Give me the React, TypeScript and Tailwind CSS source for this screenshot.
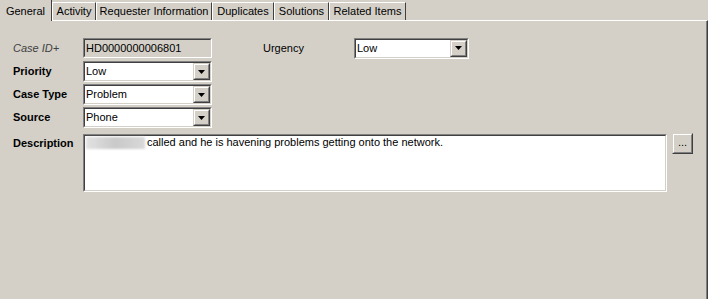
import React from "react";

const font = { fontFamily: '"Liberation Sans", Arial, sans-serif' };

function Sunken({ className = "", innerClass = "", children }: { className?: string; innerClass?: string; children?: React.ReactNode }) {
  return (
    <div className={`border border-t-[#808080] border-l-[#808080] border-b-white border-r-white ${className}`}>
      <div className={`h-full w-full border border-t-[#404040] border-l-[#404040] border-b-[#d4d0c8] border-r-[#d4d0c8] ${innerClass}`}>
        {children}
      </div>
    </div>
  );
}

function Raised({ className = "", children }: { className?: string; children?: React.ReactNode }) {
  return (
    <div className={`border border-t-[#d4d0c8] border-l-[#d4d0c8] border-b-[#404040] border-r-[#404040] ${className}`}>
      <div className="h-full w-full border border-t-white border-l-white border-b-[#808080] border-r-[#808080] bg-[#d4d0c8] flex items-center justify-center">
        {children}
      </div>
    </div>
  );
}

function Select({ value, w }: { value: string; w: string }) {
  return (
    <Sunken className={`${w} h-[21px]`} innerClass="bg-white flex items-stretch">
      <div className="flex-1 pl-[1px] text-[11px] leading-[13px] text-black flex items-center">{value}</div>
      <Raised className="w-[17px]">
        <svg width="7" height="4" viewBox="0 0 7 4">
          <polygon points="0,0 7,0 3.5,4" fill="#000" />
        </svg>
      </Raised>
    </Sunken>
  );
}

const tabs = [
  { name: "General", w: "w-[52px]" },
  { name: "Activity", w: "w-[44px]" },
  { name: "Requester Information", w: "w-[116px]" },
  { name: "Duplicates", w: "w-[62px]" },
  { name: "Solutions", w: "w-[55px]" },
  { name: "Related Items", w: "w-[77px]" },
];

export default function App() {
  return (
    <div className="w-[708px] h-[299px] bg-[#d4d0c8] flex flex-col overflow-hidden text-black" style={font}>
      <div className="h-[20px] flex items-end shrink-0">
        {tabs.map((t, i) =>
          i === 0 ? (
            <div
              key={t.name}
              className={`${t.w} self-start h-[21px] relative z-10 bg-[#d4d0c8] border-r border-r-[#404040] flex items-center justify-center text-[11px] leading-[13px] pt-[2px]`}
            >
              {t.name}
            </div>
          ) : (
            <div
              key={t.name}
              className={`${t.w} h-[18px] border-t border-l border-t-white border-l-white border-r border-r-[#404040] flex items-center justify-center text-[11px] leading-[13px]`}
            >
              <span className="whitespace-nowrap">{t.name}</span>
            </div>
          )
        )}
      </div>
      <div className="flex-1 border-t border-t-white border-r border-r-[#404040]">
        <div className="h-full border-r border-r-[#808080] pl-[13px] pt-[17px] text-[11px] leading-[13px]">
          <div className="flex items-center h-[20px]">
            <div className="w-[70px] italic text-[#404040]">Case ID+</div>
            <Sunken className="w-[129px] h-[20px]" innerClass="bg-[#d4d0c8] flex items-center pl-[1px]">
              HD0000000006801
            </Sunken>
            <div className="ml-[51px] w-[91px]">Urgency</div>
            <Select value="Low" w="w-[115px]" />
          </div>
          <div className="flex flex-col gap-[2px] mt-[3px]">
            {[
              ["Priority", "Low"],
              ["Case Type", "Problem"],
              ["Source", "Phone"],
            ].map(([l, v]) => (
              <div key={l} className="flex items-center h-[21px]">
                <div className="w-[70px] font-bold">{l}</div>
                <Select value={v} w="w-[129px]" />
              </div>
            ))}
          </div>
          <div className="flex items-start mt-[6px]">
            <div className="w-[70px] font-bold mt-[3px]">Description</div>
            <Sunken className="w-[584px] h-[58px]" innerClass="bg-white">
              <div className="flex items-center pl-[1px] h-[13px]">
                <div className="w-[59px] h-[12px] mr-[2px] bg-gradient-to-r from-[#e2e2e2] via-[#c9c9c9] to-[#d9d9d9] blur-[1px]" />
                <span className="whitespace-nowrap">called and he is havening problems getting onto the network.</span>
              </div>
            </Sunken>
            <Raised className="ml-[5px] -mt-px w-[21px] h-[21px]">
              <span className="text-[11px] leading-[11px] -mt-[2px]">...</span>
            </Raised>
          </div>
        </div>
      </div>
    </div>
  );
}
